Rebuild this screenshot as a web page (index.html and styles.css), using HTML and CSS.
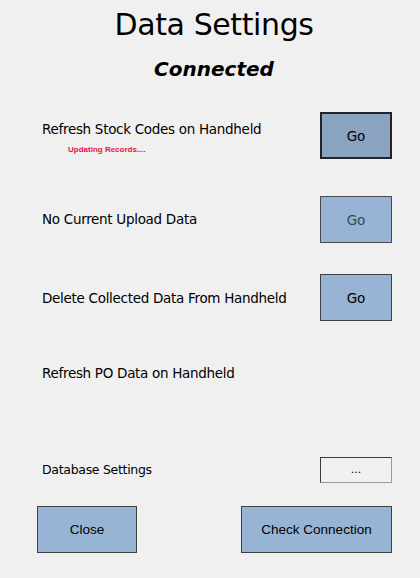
FILE: index.html
```html
<!DOCTYPE html>
<html>
<head>
<meta charset="utf-8">
<link rel="stylesheet" href="styles.css">
</head>
<body>
<div class="window">
  <header class="header">
    <h1 class="title">Data Settings</h1>
    <div class="status">Connected</div>
  </header>

  <div class="row row-1">
    <div class="label-col">
      <div class="label">Refresh Stock Codes on Handheld</div>
      <div class="progress">Updating Records....</div>
    </div>
    <button class="btn go active">Go</button>
  </div>

  <div class="row row-2">
    <div class="label-col"><div class="label">No Current Upload Data</div></div>
    <button class="btn go disabled">Go</button>
  </div>

  <div class="row row-3">
    <div class="label-col"><div class="label">Delete Collected Data From Handheld</div></div>
    <button class="btn go">Go</button>
  </div>

  <div class="row row-4">
    <div class="label-col"><div class="label">Refresh PO Data on Handheld</div></div>
  </div>

  <div class="row row-db">
    <div class="label-col"><div class="label small">Database Settings</div></div>
    <button class="btn plain">...</button>
  </div>

  <div class="footer">
    <button class="btn close">Close</button>
    <button class="btn check">Check Connection</button>
  </div>
</div>
</body>
</html>
```

FILE: styles.css
```css
html, body {
  margin: 0;
  padding: 0;
  background: #f0f0f0;
}
.window {
  width: 420px;
  height: 578px;
  display: flex;
  flex-direction: column;
  font-family: "DejaVu Sans", sans-serif;
  color: #000;
}
.header {
  height: 112px;
  box-sizing: border-box;
  padding-left: 8px;
  display: flex;
  flex-direction: column;
  align-items: center;
}
.title {
  margin: 7px 0 0 0;
  font-family: "DejaVu Sans", sans-serif;
  font-weight: normal;
  font-size: 30px;
  line-height: 36px;
  letter-spacing: -0.4px;
}
.status {
  margin-top: 14px;
  font-family: "DejaVu Sans", sans-serif;
  font-weight: bold;
  font-style: italic;
  font-size: 20px;
  line-height: 24px;
}
.row {
  display: flex;
  justify-content: space-between;
  align-items: flex-start;
  padding: 0 28px 0 42px;
}
.label-col {
  display: flex;
  flex-direction: column;
}
.label {
  font-size: 13.5px;
  line-height: 17px;
  letter-spacing: -0.3px;
  white-space: nowrap;
}
.label.small {
  font-size: 12.5px;
  line-height: 15px;
}
.progress {
  margin: 7px 0 0 26px;
  font-family: "Liberation Sans", sans-serif;
  font-size: 8px;
  font-weight: bold;
  color: #e8103c;
  line-height: 10px;
}
.row-1 { height: 47px; }
.row-1 .label-col { padding-top: 9px; }
.row-2 { height: 47px; margin-top: 37px; }
.row-2 .label-col { padding-top: 15px; }
.row-3 { height: 47px; margin-top: 31px; }
.row-3 .label-col { padding-top: 16px; }
.row-4 { height: 136px; }
.row-4 .label-col { padding-top: 44px; }
.row-db { height: 26px; }
.row-db .label-col { padding-top: 5px; }

.btn {
  box-sizing: border-box;
  margin: 0;
  padding: 0;
  font-family: "DejaVu Sans", sans-serif;
  font-size: 13.5px;
  color: #000;
  background: #98b4d4;
  border: 1px solid #3f3f3f;
  cursor: default;
}
.go {
  width: 72px;
  height: 47px;
}
.go.active {
  background: #8aa3c0;
  border: 2px solid #232323;
}
.go.disabled {
  color: #3c4450;
  border-color: #4a4a4a;
}
.plain {
  width: 72px;
  height: 26px;
  background: #f0f0f0;
  border: 1px solid #3c3c3c;
  border-color: #3c3c3c #9a9a9a #9a9a9a #3c3c3c;
  font-size: 11px;
  line-height: 12px;
}
.footer {
  display: flex;
  justify-content: space-between;
  padding: 0 28px 0 37px;
  margin-top: 23px;
}
.close {
  width: 100px;
  height: 47px;
  font-family: "Liberation Sans", sans-serif;
  font-size: 13.5px;
}
.check {
  width: 151px;
  height: 47px;
  font-family: "Liberation Sans", sans-serif;
  font-size: 13.5px;
}
```
